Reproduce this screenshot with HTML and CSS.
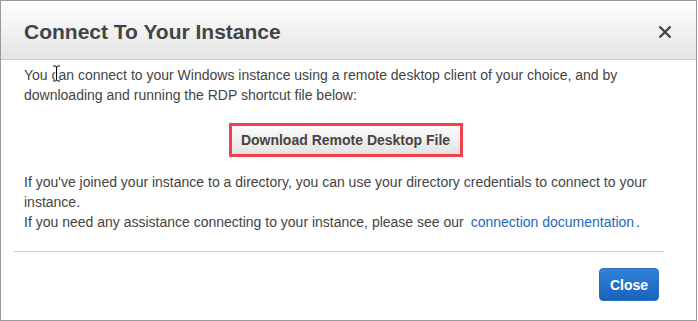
FILE: index.html
```html
<!DOCTYPE html>
<html lang="en">
<head>
<meta charset="utf-8">
<title>Connect To Your Instance</title>
<link rel="stylesheet" href="styles.css">
</head>
<body>
<div class="dialog">
  <div class="dialog-header">
    <h1 class="dialog-title">Connect To Your Instance</h1>
    <button class="dialog-x" aria-label="Close">
      <svg width="14" height="14" viewBox="0 0 14 14"><path d="M1.5 1.5 L12.5 12.5 M12.5 1.5 L1.5 12.5" stroke="#444" stroke-width="2.4" fill="none"/></svg>
    </button>
  </div>
  <div class="dialog-body">
    <p class="text">You can connect to your Windows instance using a remote desktop client of your choice, and by downloading and running the RDP shortcut file below:</p>
    <div class="download-row">
      <button class="download-btn">Download Remote Desktop File</button>
    </div>
    <p class="text">If you've joined your instance to a directory, you can use your directory credentials to connect to your instance.<br>If you need any assistance connecting to your instance, please see our <a class="link" href="#">connection documentation</a>.</p>
  </div>
  <div class="dialog-footer">
    <button class="close-btn">Close</button>
  </div>
  <svg class="cursor" width="9" height="17" viewBox="0 0 9 17"><path d="M1 1 H3.5 L4.5 2 L5.5 1 H8 M4.5 2 V15 M1 16 H3.5 L4.5 15 L5.5 16 H8" stroke="#fff" stroke-width="2.6" fill="none"/><path d="M1 1 H3.5 L4.5 2 L5.5 1 H8 M4.5 2 V15 M1 16 H3.5 L4.5 15 L5.5 16 H8" stroke="#000" stroke-width="1" fill="none"/></svg>
</div>
</body>
</html>
```
FILE: styles.css
```css
* { box-sizing: border-box; }
html, body { margin: 0; padding: 0; background: #fff; }
body { font-family: "Liberation Sans", Arial, sans-serif; color: #444; }

.dialog {
  position: relative;
  width: 697px;
  height: 321px;
  border: 1px solid #999;
  background: #fff;
}

.dialog-header {
  height: 59px;
  border-bottom: 1px solid #c8c8c8;
  background: linear-gradient(#ffffff, #e4e4e4);
  display: flex;
  align-items: center;
  justify-content: space-between;
  padding: 4px 24px 0 23px;
}
.dialog-title {
  margin: 0;
  font-size: 21px;
  font-weight: bold;
  color: #444;
}
.dialog-x {
  border: 0;
  background: none;
  padding: 0;
  width: 14px;
  height: 14px;
  display: flex;
}

.dialog-body {
  padding: 5px 29px 0 23px;
}
.text {
  margin: 0;
  font-size: 14px;
  line-height: 20px;
  color: #444;
}
.download-row {
  display: flex;
  justify-content: center;
  margin: 18px 0 15px;
}
.download-btn {
  font-family: "Liberation Sans", Arial, sans-serif;
  font-size: 14px;
  font-weight: bold;
  color: #444;
  height: 34px;
  width: 234px;
  border: 3px solid #f2434a;
  background: linear-gradient(#fbfbfb, #e3e3e3);
  padding: 0;
}
.link {
  color: #1f68bd;
  text-decoration: none;
  padding: 0 2px 0 3px;
}

.dialog-footer {
  margin: 19px 32px 0 13px;
  border-top: 1px solid #ccc;
  padding-top: 16px;
  display: flex;
  justify-content: flex-end;
}
.close-btn {
  font-family: "Liberation Sans", Arial, sans-serif;
  width: 60px;
  height: 33px;
  margin-right: 5px;
  border: 1px solid #2a6fc0;
  border-radius: 4px;
  background: linear-gradient(#2f83d9, #1b63ba);
  color: #fff;
  font-size: 14px;
  font-weight: bold;
  padding: 0;
}

.cursor {
  position: absolute;
  left: 51px;
  top: 64px;
}
```
